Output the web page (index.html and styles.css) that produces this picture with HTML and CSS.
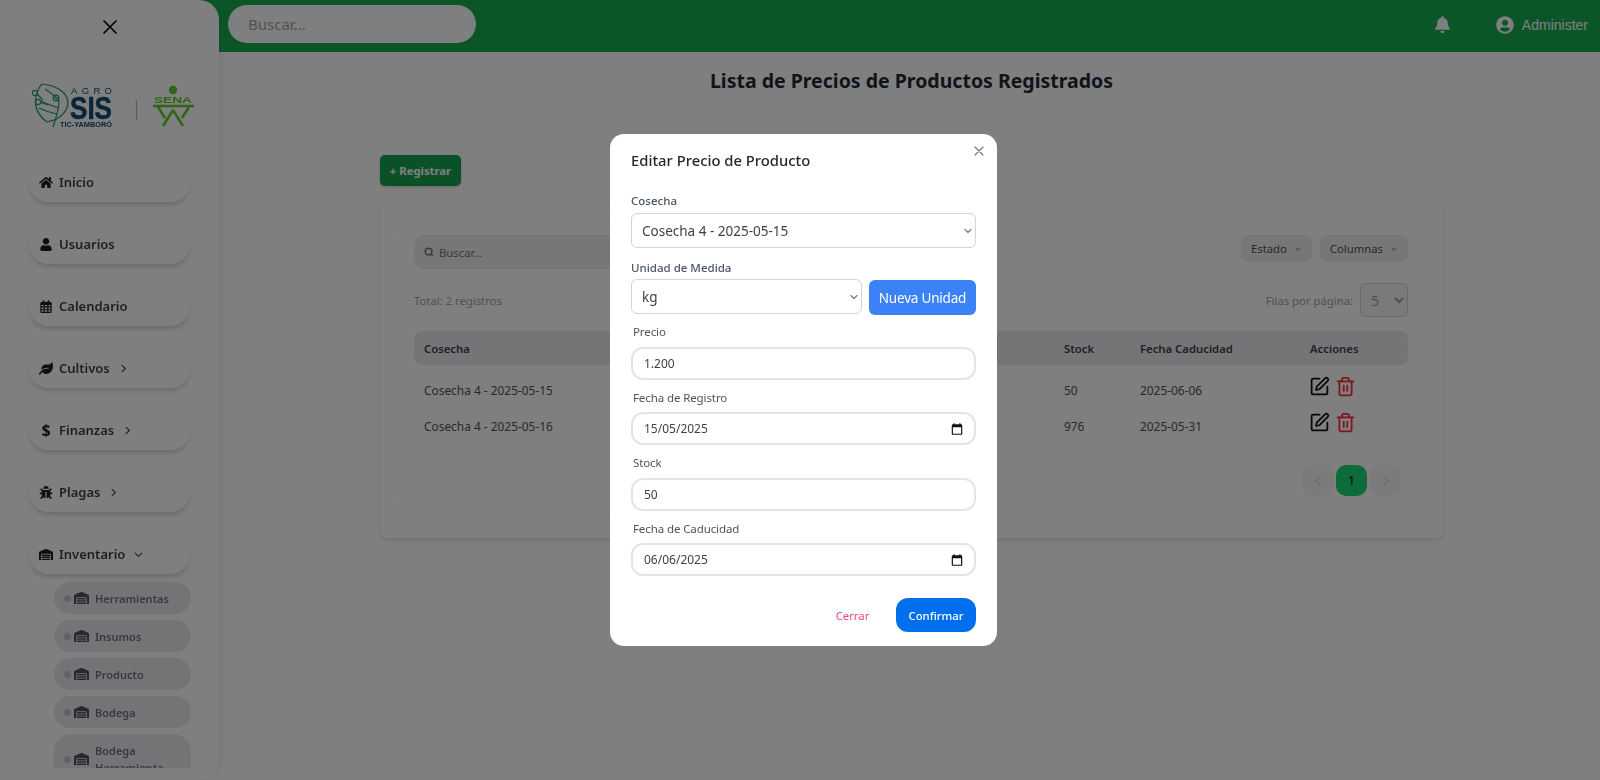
FILE: index.html
```html
<!DOCTYPE html>
<html lang="es">
<head>
	<meta charset="utf-8">
	<title>Precios de Productos</title>
	<link rel="stylesheet" href="styles.css">
</head>
<body>
	<svg class="defs" width="0" height="0">
		<symbol id="i-home" viewBox="0 0 576 512"><path d="M280.37 148.26L96 300.11V464a16 16 0 0 0 16 16l112.06-.29a16 16 0 0 0 15.92-16V368a16 16 0 0 1 16-16h64a16 16 0 0 1 16 16v95.64a16 16 0 0 0 16 16.05L464 480a16 16 0 0 0 16-16V300L295.67 148.26a12.19 12.19 0 0 0-15.3 0zM571.6 251.47L488 182.56V44.05a12 12 0 0 0-12-12h-56a12 12 0 0 0-12 12v72.61L318.47 43a48 48 0 0 0-61 0L4.34 251.47a12 12 0 0 0-1.6 16.9l25.5 31A12 12 0 0 0 45.15 301l235.22-193.74a12.19 12.19 0 0 1 15.3 0L530.9 301a12 12 0 0 0 16.9-1.6l25.5-31a12 12 0 0 0-1.7-16.93z"/></symbol>
		<symbol id="i-user" viewBox="0 0 448 512"><path d="M224 256c70.7 0 128-57.3 128-128S294.7 0 224 0 96 57.3 96 128s57.3 128 128 128zm89.6 32h-16.7c-22.2 10.2-46.9 16-72.9 16s-50.6-5.8-72.9-16h-16.7C60.2 288 0 348.2 0 422.4V464c0 26.5 21.5 48 48 48h352c26.5 0 48-21.5 48-48v-41.6c0-74.2-60.2-134.4-134.4-134.4z"/></symbol>
		<symbol id="i-cal" viewBox="0 0 448 512"><path d="M152 24c0-13.3-10.7-24-24-24s-24 10.7-24 24V64H64C28.7 64 0 92.7 0 128v16 48V448c0 35.3 28.7 64 64 64H384c35.3 0 64-28.7 64-64V192 144 128c0-35.3-28.7-64-64-64H344V24c0-13.3-10.7-24-24-24s-24 10.7-24 24V64H152V24zM48 192h80v56H48V192zm0 104h80v64H48V296zm128 0h96v64H176V296zm144 0h80v64H320V296zm80-48H320V192h80v56zm0 160v40c0 8.8-7.2 16-16 16H320V408h80zm-128 0v56H176V408h96zm-144 0v56H64c-8.8 0-16-7.2-16-16V408h80zM272 248H176V192h96v56z"/></symbol>
		<symbol id="i-leaf" viewBox="0 0 576 512"><path d="M546.2 9.7c-5.6-12.5-21.6-13-28.3-1.2C486.9 62.4 431.4 96 368 96h-80C182 96 96 182 96 288c0 7 .8 13.7 1.5 20.5C161.3 262.8 253.4 224 384 224c8.8 0 16 7.2 16 16s-7.2 16-16 16C132.6 256 26 410.1 2.4 468c-6.6 16.3 1.2 34.9 17.5 41.6 16.4 6.8 35-1.1 41.8-17.3 1.5-3.6 20.9-47.9 71.9-90.6 32.4 43.9 94 85.8 174.9 77.2C465.5 467.5 576 326.7 576 154.3c0-50.2-10.8-102.2-29.8-144.6z"/></symbol>
		<symbol id="i-bug" viewBox="0 0 512 512"><path d="M511.988 288.9c-.478 17.43-15.217 31.1-32.653 31.1H424v16c0 21.864-4.882 42.584-13.6 61.145l60.228 60.228c12.496 12.497 12.496 32.758 0 45.255-12.498 12.497-32.759 12.496-45.256 0l-54.736-54.736C345.886 467.965 314.351 480 280 480V236c0-6.627-5.373-12-12-12h-24c-6.627 0-12 5.373-12 12v244c-34.351 0-65.886-12.035-90.636-32.108l-54.736 54.736c-12.498 12.497-32.759 12.496-45.256 0-12.496-12.497-12.496-32.758 0-45.255l60.228-60.228C92.882 378.584 88 357.864 88 336v-16H32.666C15.23 320 .491 306.33.013 288.9-.484 270.816 14.028 256 32 256h56v-58.745l-46.628-46.628c-12.496-12.497-12.496-32.758 0-45.255 12.498-12.497 32.758-12.497 45.256 0L141.255 160h229.489l54.627-54.627c12.498-12.497 32.758-12.497 45.256 0 12.496 12.497 12.496 32.758 0 45.255L424 197.255V256h56c17.972 0 32.484 14.816 31.988 32.9zM257 0c-61.856 0-112 50.144-112 112h224C369 50.144 318.856 0 257 0z"/></symbol>
		<symbol id="i-wh" viewBox="0 0 640 512"><path d="M504 352H136.4c-4.4 0-8 3.6-8 8l-.1 48c0 4.4 3.6 8 8 8H504c4.4 0 8-3.6 8-8v-48c0-4.4-3.6-8-8-8zm0 96H136.1c-4.4 0-8 3.6-8 8l-.1 48c0 4.4 3.6 8 8 8h368c4.4 0 8-3.6 8-8v-48c0-4.4-3.6-8-8-8zm0-192H136.6c-4.4 0-8 3.6-8 8l-.1 48c0 4.4 3.6 8 8 8H504c4.4 0 8-3.6 8-8v-48c0-4.4-3.6-8-8-8zm106.5-139L338.4 3.7a48.15 48.15 0 0 0-36.9 0L29.5 117C11.7 124.5 0 141.9 0 161.3V504c0 4.4 3.6 8 8 8h80c4.4 0 8-3.6 8-8V256c0-17.6 14.6-32 32.6-32h382.8c18 0 32.6 14.4 32.6 32v248c0 4.4 3.6 8 8 8h80c4.4 0 8-3.6 8-8V161.3c0-19.4-11.7-36.8-29.5-44.3z"/></symbol>
		<symbol id="i-chev" viewBox="0 0 24 24"><path d="M9 5l7 7-7 7" fill="none" stroke="currentColor" stroke-width="2.4" stroke-linecap="round" stroke-linejoin="round"/></symbol>
		<symbol id="i-prev" viewBox="0 0 24 24"><path d="M15 5l-7 7 7 7" fill="none" stroke="currentColor" stroke-width="2.4" stroke-linecap="round" stroke-linejoin="round"/></symbol>
		<symbol id="i-down" viewBox="0 0 24 24"><path d="M5 9l7 7 7-7" fill="none" stroke="currentColor" stroke-width="2.4" stroke-linecap="round" stroke-linejoin="round"/></symbol>
		<symbol id="i-edit" viewBox="0 0 24 24"><g fill="none" stroke="currentColor" stroke-width="2" stroke-linecap="round" stroke-linejoin="round"><path d="M12 3H5a2 2 0 0 0-2 2v14a2 2 0 0 0 2 2h14a2 2 0 0 0 2-2v-7"/><path d="M18.375 2.625a1 1 0 0 1 3 3l-9.013 9.014a2 2 0 0 1-.853.505l-2.873.84a.5.5 0 0 1-.62-.62l.84-2.873a2 2 0 0 1 .506-.852z"/></g></symbol>
		<symbol id="i-trash" viewBox="0 0 24 24"><g fill="none" stroke="currentColor" stroke-width="2" stroke-linecap="round" stroke-linejoin="round"><path d="M3 6h18"/><path d="M19 6v14c0 1-1 2-2 2H7c-1 0-2-1-2-2V6"/><path d="M8 6V4c0-1 1-2 2-2h4c1 0 2 1 2 2v2"/><path d="M10 11v6"/><path d="M14 11v6"/></g></symbol>
		<symbol id="i-date" viewBox="0 0 24 24"><path d="M19 4h-1V2h-2v2H8V2H6v2H5a2 2 0 0 0-2 2v14a2 2 0 0 0 2 2h14a2 2 0 0 0 2-2V6a2 2 0 0 0-2-2zm0 16H5V9h14v11z"/></symbol>
	</svg>

	<aside class="sidebar">
		<div class="side-close">
			<svg width="14" height="14" viewBox="0 0 14 14"><path d="M1 1l12 12M13 1L1 13" stroke="#000" stroke-width="1.7" stroke-linecap="round"/></svg>
		</div>
		<div class="side-logo">
			<svg width="172" height="50" viewBox="0 0 172 50">
				<g fill="none" stroke="#1c9c6c" stroke-width="1.2">
					<path d="M14 4C26 5 39 11 40 22C40 32 31 40 19 42C11 36 6 27 8 17C9 12 11 7 14 4Z"/>
					<path d="M25 47C28 38 31 30 31 21C27 16 22 12 17 9"/>
					<path d="M31 28C25 26 18 24 13 21M29 34C23 33 17 31 11 28"/>
					<circle cx="7" cy="13" r="2.6"/>
					<circle cx="10" cy="22" r="2.6"/>
					<circle cx="28" cy="18" r="2.8"/>
					<path d="M9.500 14.500L15 20M12.500 22.500L20 25"/>
				</g>
				<circle cx="28" cy="18" r="1.1" fill="#1c9c6c"/>
				<text class="lg-agro" x="43" y="14" textLength="41">AGRO</text>
				<text class="lg-sis" x="42" y="39" textLength="42" lengthAdjust="spacingAndGlyphs">SIS</text>
				<text class="lg-tic" x="32" y="47" textLength="52" lengthAdjust="spacingAndGlyphs">TIC-YAMBORÓ</text>
				<path d="M108.500 20v20" stroke="#b9b9b9" stroke-width="1.2"/>
				<circle cx="145" cy="10" r="4.200" fill="#5ecb2a"/>
				<text class="lg-sena" x="126" y="23" textLength="38" lengthAdjust="spacingAndGlyphs">SENA</text>
				<path d="M125 26h41" stroke="#5ecb2a" stroke-width="2.400"/>
				<path d="M145 30l-10 16M145 30l10 16M130 27l7 11M161 27l-7 11" stroke="#5ecb2a" stroke-width="2.600" fill="none"/>
			</svg>
		</div>
		<nav class="side-nav">
			<a class="nav-item"><svg class="nav-ico"><use href="#i-home"/></svg>Inicio</a>
			<a class="nav-item"><svg class="nav-ico"><use href="#i-user"/></svg>Usuarios</a>
			<a class="nav-item"><svg class="nav-ico"><use href="#i-cal"/></svg>Calendario</a>
			<a class="nav-item"><svg class="nav-ico"><use href="#i-leaf"/></svg>Cultivos<svg class="nav-chev"><use href="#i-chev"/></svg></a>
			<a class="nav-item"><span class="nav-ico nav-dollar">$</span>Finanzas<svg class="nav-chev"><use href="#i-chev"/></svg></a>
			<a class="nav-item"><svg class="nav-ico"><use href="#i-bug"/></svg>Plagas<svg class="nav-chev"><use href="#i-chev"/></svg></a>
			<a class="nav-item open"><svg class="nav-ico"><use href="#i-wh"/></svg>Inventario<svg class="nav-chev"><use href="#i-down"/></svg></a>
			<div class="sub-list">
				<a class="sub-item"><i class="dot"></i><svg class="sub-ico"><use href="#i-wh"/></svg>Herramientas</a>
				<a class="sub-item"><i class="dot"></i><svg class="sub-ico"><use href="#i-wh"/></svg>Insumos</a>
				<a class="sub-item"><i class="dot"></i><svg class="sub-ico"><use href="#i-wh"/></svg>Producto</a>
				<a class="sub-item"><i class="dot"></i><svg class="sub-ico"><use href="#i-wh"/></svg>Bodega</a>
				<a class="sub-item tall"><i class="dot"></i><svg class="sub-ico"><use href="#i-wh"/></svg><span>Bodega Herramienta</span></a>
			</div>
		</nav>
	</aside>

	<header class="topbar">
		<div class="top-search">Buscar...</div>
		<div class="top-right">
			<svg class="bell" viewBox="0 0 448 512"><path d="M224 512c35.320 0 63.970-28.650 63.970-64H160.030c0 35.350 28.650 64 63.970 64zm215.390-149.710c-19.320-20.760-55.470-51.990-55.470-154.290 0-77.700-54.480-139.900-127.940-155.160V32c0-17.670-14.320-32-31.980-32s-31.980 14.330-31.980 32v20.840C118.560 68.100 64.080 130.300 64.080 208c0 102.300-36.150 133.530-55.470 154.290-6 6.450-8.660 14.160-8.610 21.710.11 16.400 12.980 32 32.100 32h383.800c19.120 0 32-15.600 32.100-32 .05-7.550-2.610-15.270-8.610-21.710z"/></svg>
			<svg class="avatar" viewBox="0 0 496 512"><path d="M248 8C111 8 0 119 0 256s111 248 248 248 248-111 248-248S385 8 248 8zm0 96c48.600 0 88 39.400 88 88s-39.400 88-88 88-88-39.400-88-88 39.400-88 88-88zm0 344c-58.700 0-111.300-26.600-146.500-68.200 18.800-35.400 55.600-59.800 98.500-59.800 2.400 0 4.800.4 7.100 1.100 13 4.200 26.600 6.900 40.900 6.900 14.300 0 28-2.700 40.900-6.900 2.300-.7 4.700-1.100 7.100-1.100 42.900 0 79.700 24.400 98.500 59.800C359.300 421.400 306.700 448 248 448z"/></svg>
			<span class="admin-name">Administer</span>
		</div>
	</header>

	<main class="content">
		<h1 class="page-title">Lista de Precios de Productos Registrados</h1>
		<div class="wrap">
			<button class="btn-register">+ Registrar</button>
			<section class="outer-card">
				<div class="inner-card">
					<div class="toolbar">
						<div class="tb-search">
							<svg width="10" height="10" viewBox="0 0 24 24"><circle cx="11" cy="11" r="8" fill="none" stroke="currentColor" stroke-width="3.500"/><path d="M17 17l4 4" stroke="currentColor" stroke-width="3.500"/></svg>
							Buscar...
						</div>
						<button class="tb-btn">Estado<svg><use href="#i-down"/></svg></button>
						<button class="tb-btn">Columnas<svg><use href="#i-down"/></svg></button>
					</div>
					<div class="summary">
						<span>Total: 2 registros</span>
						<label class="per-page">Filas por página:
							<select class="per-select"><option>5</option></select>
						</label>
					</div>
					<table class="grid">
						<colgroup>
							<col class="c1"><col class="c2"><col class="c3"><col class="c4"><col class="c5"><col class="c6"><col class="c7">
						</colgroup>
						<thead>
							<tr><th>Cosecha</th><th>Unidad de Medida</th><th>Precio</th><th>Fecha Registro</th><th>Stock</th><th>Fecha Caducidad</th><th>Acciones</th></tr>
						</thead>
						<tbody>
							<tr>
								<td>Cosecha 4 - 2025-05-15</td><td>kg</td><td>1.200</td><td>2025-05-15</td><td>50</td><td>2025-06-06</td>
								<td><span class="acts"><svg class="a-edit"><use href="#i-edit"/></svg><svg class="a-del"><use href="#i-trash"/></svg></span></td>
							</tr>
							<tr>
								<td>Cosecha 4 - 2025-05-16</td><td>kg</td><td>1.200</td><td>2025-05-16</td><td>976</td><td>2025-05-31</td>
								<td><span class="acts"><svg class="a-edit"><use href="#i-edit"/></svg><svg class="a-del"><use href="#i-trash"/></svg></span></td>
							</tr>
						</tbody>
					</table>
					<div class="pager">
						<button class="pg"><svg><use href="#i-prev"/></svg></button>
						<button class="pg current">1</button>
						<button class="pg"><svg><use href="#i-chev"/></svg></button>
					</div>
				</div>
			</section>
		</div>
	</main>

	<div class="overlay">
		<form class="modal">
			<svg class="modal-x" width="10" height="10" viewBox="0 0 10 10"><path d="M1 1l8 8M9 1L1 9" stroke="#71717a" stroke-width="1.100" stroke-linecap="round"/></svg>
			<h2 class="modal-title">Editar Precio de Producto</h2>
			<div class="f-select">
				<label class="lb-s">Cosecha</label>
				<select class="sel"><option>Cosecha 4 - 2025-05-15</option></select>
			</div>
			<div class="f-select">
				<label class="lb-s">Unidad de Medida</label>
				<div class="unit-row">
					<select class="sel"><option>kg</option></select>
					<button type="button" class="btn-unit">Nueva Unidad</button>
				</div>
			</div>
			<div class="f-input">
				<label class="lb-i">Precio</label>
				<input class="inp" type="text" value="1.200">
			</div>
			<div class="f-input">
				<label class="lb-i">Fecha de Registro</label>
				<div class="date-box">
					<input class="inp" type="text" value="15/05/2025">
					<svg class="date-ico"><use href="#i-date"/></svg>
				</div>
			</div>
			<div class="f-input">
				<label class="lb-i">Stock</label>
				<input class="inp" type="text" value="50">
			</div>
			<div class="f-input">
				<label class="lb-i">Fecha de Caducidad</label>
				<div class="date-box">
					<input class="inp" type="text" value="06/06/2025">
					<svg class="date-ico"><use href="#i-date"/></svg>
				</div>
			</div>
			<div class="modal-foot">
				<button type="button" class="btn-close">Cerrar</button>
				<button type="button" class="btn-ok">Confirmar</button>
			</div>
		</form>
	</div>
</body>
</html>
```

FILE: styles.css
```css
*{
	margin: 0;
	padding: 0;
	box-sizing: border-box;
}
html,body{
	height: 100%;
	overflow: hidden;
}
body{
	background: #fff;
	color: #374151;
	font-family: "Noto Sans", "Open Sans", sans-serif;
	font-size: 12px;
}
button,input,select{
	font-family: inherit;
}
.defs{
	position: absolute;
}

/* sidebar */
.sidebar{
	position: fixed;
	top: 0;
	left: 0;
	bottom: 0;
	width: 219px;
	z-index: 2;
	background: #fff;
	border-radius: 0 20px 20px 0;
	box-shadow: 2px 0 6px rgba(0,0,0,.08);
	display: flex;
	flex-direction: column;
	padding-bottom: 12px;
}
.side-close{
	height: 54px;
	display: flex;
	align-items: center;
	justify-content: center;
	padding-left: 1px;
}
.side-logo{
	height: 108px;
	padding: 26px 0 0 28px;
}
.lg-agro{
	font-family: "Liberation Sans", sans-serif;
	font-size: 9.5px;
	fill: #124a70;
}
.lg-sis{
	font-family: "Liberation Sans", sans-serif;
	font-size: 31px;
	font-weight: 700;
	fill: #124a70;
	stroke: #124a70;
	stroke-width: .6px;
}
.lg-tic{
	font-family: "Liberation Sans", sans-serif;
	font-size: 6.5px;
	font-weight: 700;
	fill: #124a70;
}
.lg-sena{
	font-family: "Liberation Sans", sans-serif;
	font-size: 9px;
	font-weight: 700;
	fill: #5ecb2a;
}
.side-nav{
	flex: 1;
	overflow: hidden;
	padding: 0 28px 0 29px;
}
.nav-item{
	display: flex;
	align-items: center;
	width: 161px;
	height: 40px;
	margin-bottom: 22px;
	padding-left: 10px;
	border-radius: 20px;
	font-size: 13px;
	font-weight: 600;
	color: #3b3f46;
	box-shadow: 0 4px 5px -1px rgba(0,0,0,.16);
}
.nav-item.open{
	margin-bottom: 8px;
}
.nav-ico{
	width: 14px;
	height: 13px;
	margin-right: 6px;
	fill: #1d1f24;
	flex: none;
}
.nav-dollar{
	text-align: center;
	font-size: 16px;
	font-weight: 700;
	line-height: 13px;
	color: #1d1f24;
}
.nav-chev{
	width: 11px;
	height: 11px;
	margin-left: 8px;
	color: #444;
}
.sub-list{
	display: flex;
	flex-direction: column;
	gap: 6px;
	margin-left: 25px;
	width: 137px;
}
.sub-item{
	display: flex;
	align-items: center;
	flex: none;
	height: 32px;
	padding-left: 10px;
	border-radius: 16px;
	background: #e9e9ee;
	font-size: 11px;
	font-weight: 600;
	color: #6b7280;
}
.sub-item.tall{
	height: 50px;
	line-height: 17px;
	border-radius: 18px;
}
.sub-item span{
	width: 80px;
}
.dot{
	width: 7px;
	height: 7px;
	margin-right: 3px;
	border-radius: 50%;
	background: #c3c4cc;
	flex: none;
}
.sub-ico{
	width: 15px;
	height: 12px;
	margin-right: 6px;
	fill: #4b5563;
	flex: none;
}

/* topbar */
.topbar{
	height: 52px;
	padding: 0 12px 0 228px;
	background: #17ad52;
	display: flex;
	align-items: center;
	justify-content: space-between;
}
.top-search{
	width: 248px;
	height: 38px;
	margin-top: -4px;
	padding-left: 20px;
	border-radius: 19px;
	background: #fff;
	color: #9ca3af;
	font-size: 15px;
	line-height: 38px;
}
.top-right{
	display: flex;
	align-items: center;
	margin-top: -3px;
}
.bell{
	width: 15px;
	height: 17px;
	fill: #fff;
	margin-right: 46px;
}
.avatar{
	width: 18px;
	height: 18px;
	fill: #fff;
	margin-right: 8px;
}
.admin-name{
	color: #fff;
	font-family: "Liberation Sans", Arial, sans-serif;
	font-size: 14px;
}

/* content */
.content{
	padding-left: 223px;
}
.page-title{
	margin-top: 15px;
	height: 28px;
	line-height: 28px;
	text-align: center;
	font-size: 19.5px;
	font-weight: 700;
	color: #1f2937;
}
.wrap{
	width: 1063px;
	margin: 60px auto 0;
}
.btn-register{
	display: block;
	width: 81px;
	height: 31px;
	border: 0;
	border-radius: 5px;
	background: #17a34e;
	color: #fff;
	font-size: 11.3px;
	font-weight: 700;
	box-shadow: 0 1px 3px rgba(0,0,0,.2);
}
.outer-card{
	margin-top: 17px;
	padding: 18px 21px 22px 20px;
	background: #fff;
	border-radius: 8px;
	box-shadow: 0 2px 5px rgba(0,0,0,.12);
}
.inner-card{
	padding: 14px 14px 20px;
	border-radius: 16px;
	box-shadow: 0 0 2px rgba(0,0,0,.09);
}
.toolbar{
	display: flex;
	align-items: flex-start;
	gap: 8px;
}
.tb-search{
	width: 400px;
	height: 34px;
	display: flex;
	align-items: center;
	gap: 5px;
	padding-left: 10px;
	margin-right: auto;
	border-radius: 10px;
	background: #eeeef1;
	color: #71717a;
	font-size: 11.3px;
}
.tb-btn{
	display: flex;
	align-items: center;
	justify-content: center;
	gap: 7px;
	height: 27px;
	padding: 0 10px;
	border: 0;
	border-radius: 8px;
	background: #eeeef1;
	color: #52525b;
	font-size: 11.3px;
}
.tb-btn svg{
	width: 8px;
	height: 8px;
}
.summary{
	margin-top: 14px;
	height: 34px;
	display: flex;
	align-items: center;
	justify-content: space-between;
	color: #a1a1aa;
	font-size: 11.3px;
}
.per-page{
	display: flex;
	align-items: center;
	gap: 7px;
}
.per-select{
	width: 48px;
	height: 34px;
	padding-left: 6px;
	border: 1px solid #d4d4d8;
	border-radius: 4px;
	background: #f4f4f5;
	color: #a1a1aa;
	font-size: 14px;
}

/* table */
.grid{
	width: 994px;
	margin-top: 14px;
	table-layout: fixed;
	border-collapse: separate;
	border-spacing: 0;
}
.c1{width: 220px;}
.c2{width: 170px;}
.c3{width: 100px;}
.c4{width: 150px;}
.c5{width: 76px;}
.c6{width: 170px;}
.c7{width: 108px;}
.grid th{
	height: 34px;
	padding-left: 10px;
	text-align: left;
	font-size: 11.3px;
	font-weight: 600;
	background: #eaebf0;
	color: #3f3f46;
}
.grid th:first-child{
	border-radius: 8px 0 0 8px;
}
.grid th:last-child{
	border-radius: 0 8px 8px 0;
}
.grid tbody tr:first-child td{
	padding-top: 7px;
	height: 43px;
}
.grid td{
	height: 36px;
	padding-left: 10px;
	font-size: 11.9px;
	color: #52525b;
}
.acts{
	display: flex;
	gap: 5px;
	margin: -7px 0 0 -1px;
}
.acts svg{
	width: 21px;
	height: 21px;
}
.a-edit{
	color: #111;
}
.a-del{
	color: #ff2a3a;
}
.pager{
	display: flex;
	justify-content: flex-end;
	gap: 3px;
	margin-top: 21px;
	padding-right: 7px;
}
.pg{
	width: 31px;
	height: 31px;
	border: 0;
	border-radius: 10px;
	background: #f7f7f8;
	color: #d4d4d8;
	font-size: 12px;
	display: flex;
	align-items: center;
	justify-content: center;
}
.pg svg{
	width: 12px;
	height: 12px;
}
.pg.current{
	background: #1cd874;
	color: #11331f;
	font-weight: 500;
}

/* modal */
.overlay{
	position: fixed;
	top: 0;
	left: 0;
	right: 0;
	bottom: 0;
	z-index: 10;
	padding-left: 7px;
	background: rgba(0,0,0,.5);
	display: flex;
	align-items: center;
	justify-content: center;
}
.modal{
	position: relative;
	width: 387px;
	height: 512px;
	padding: 0 21px;
	background: #fff;
	border-radius: 14px;
}
.modal-x{
	position: absolute;
	top: 12px;
	right: 13px;
}
.modal-title{
	height: 58px;
	padding-top: 14px;
	font-size: 14.8px;
	font-weight: 500;
	line-height: 24px;
	color: #27272a;
}
.f-select{
	margin-bottom: 11px;
}
.f-select:first-of-type .lb-s{
	margin-bottom: 4px;
}
.lb-s{
	display: block;
	margin-bottom: 3px;
	font-size: 11.5px;
	line-height: 17px;
	font-weight: 500;
	color: #4b5563;
}
.sel{
	display: block;
	width: 100%;
	height: 35px;
	padding-left: 10px;
	border: 1px solid #d4d4d8;
	border-radius: 6px;
	background: #fff url("data:image/svg+xml,%3Csvg xmlns='http://www.w3.org/2000/svg' width='8' height='8' viewBox='0 0 8 8'%3E%3Cpath d='M1 2.500l3 3 3-3' fill='none' stroke='%236b7280' stroke-width='1.100' stroke-linecap='round'/%3E%3C/svg%3E") no-repeat right 3px center;
	color: #3f3f46;
	font-size: 13.5px;
	appearance: none;
}
.unit-row{
	display: flex;
	gap: 7px;
	margin-bottom: -3px;
}
.unit-row .sel{
	flex: 1;
}
.btn-unit{
	width: 107px;
	height: 35px;
	margin-top: 1px;
	border: 0;
	border-radius: 6px;
	background: #3b82f6;
	color: #fff;
	font-size: 13.5px;
	letter-spacing: -.2px;
}
.f-input{
	margin-bottom: 9px;
}
.lb-i{
	display: block;
	margin-bottom: 6.5px;
	padding-left: 2px;
	font-size: 11.5px;
	letter-spacing: -.1px;
	line-height: 17px;
	color: #52525b;
}
.inp{
	display: block;
	width: 100%;
	height: 33px;
	padding-left: 11px;
	border: 2px solid #e4e4e7;
	border-radius: 12px;
	background: #fff;
	color: #3f3f46;
	font-size: 12px;
	outline: none;
}
.date-box{
	position: relative;
}
.date-ico{
	position: absolute;
	top: 10px;
	right: 12px;
	width: 14px;
	height: 14px;
	fill: #111;
}
.modal-foot{
	display: flex;
	justify-content: flex-end;
	align-items: center;
	gap: 7px;
	margin-top: 22px;
}
.btn-close{
	width: 73px;
	height: 34px;
	border: 0;
	background: none;
	color: #ee4683;
	font-size: 11.3px;
}
.btn-ok{
	width: 80px;
	height: 34px;
	border: 0;
	border-radius: 12px;
	background: #006fee;
	color: #fff;
	font-size: 11.3px;
	font-weight: 500;
}
```
